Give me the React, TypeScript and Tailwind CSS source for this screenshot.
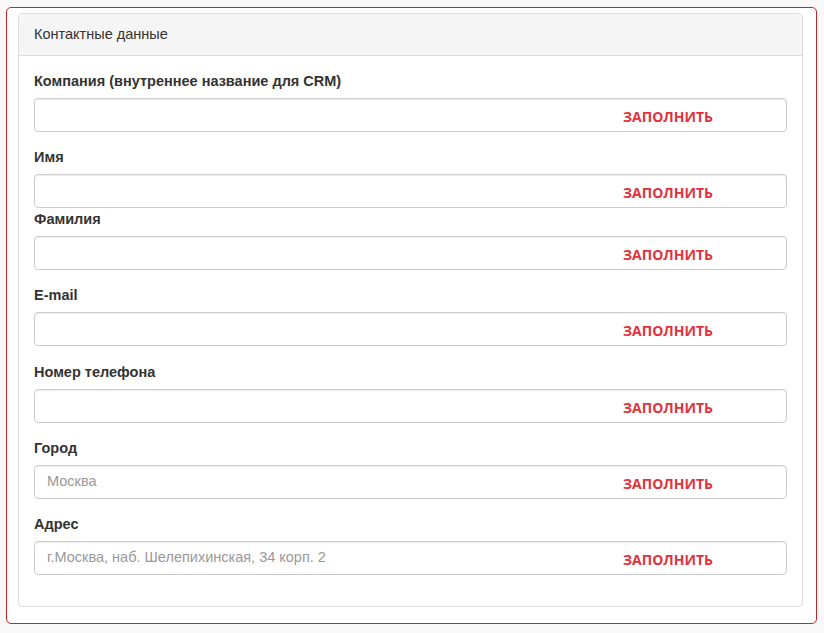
const fields = [
  { label: 'Компания (внутреннее название для CRM)', placeholder: '', gap: 'mb-[15px]' },
  { label: 'Имя', placeholder: '', gap: 'mb-px' },
  { label: 'Фамилия', placeholder: '', gap: 'mb-[15px]' },
  { label: 'E-mail', placeholder: '', gap: 'mb-[16px]' },
  { label: 'Номер телефона', placeholder: '', gap: 'mb-[15px]' },
  { label: 'Город', placeholder: 'Москва', gap: 'mb-[15px]' },
  { label: 'Адрес', placeholder: 'г.Москва, наб. Шелепихинская, 34 корп. 2', gap: 'mb-[16px]' },
]

function Field({ label, placeholder, gap }: { label: string; placeholder: string; gap: string }) {
  return (
    <div className={gap}>
      <label className="block h-[21px] mb-[6px] text-[14.5px] leading-[21px] font-bold text-[#333]">{label}</label>
      <div className="flex items-center h-[34px] rounded-[4px] border border-[#ccc] bg-white shadow-[inset_0_1px_1px_rgba(0,0,0,0.075)] pl-3 pr-[73px]">
        <span className="flex-1 text-[14.5px] text-[#999]">{placeholder}</span>
        <span className="font-['Open_Sans',sans-serif] font-bold text-[14px] text-[#e2323c] pt-[3px]">
          ЗАПОЛНИТЬ
        </span>
      </div>
    </div>
  )
}

export default function App() {
  return (
    <div className="min-h-[633px] bg-[#f8f8f8] pt-[7px] pl-[6px] pr-[7px] pb-[8px] font-['Liberation_Sans',Arial,sans-serif]">
      <div className="bg-white border border-[#c0272d] rounded-[5px] pt-[5px] pl-[11px] pr-[13px] pb-[16px]">
        <div className="border border-[#ddd] rounded-[4px] bg-white">
          <div className="h-[42px] flex items-center px-[15px] bg-[#f5f5f5] border-b border-[#ddd] rounded-t-[3px] text-[14.5px] text-[#333]">
            Контактные данные
          </div>
          <div className="pt-[15px] px-[15px] pb-[15px]">
            {fields.map((f) => (
              <Field key={f.label} {...f} />
            ))}
          </div>
        </div>
      </div>
    </div>
  )
}
